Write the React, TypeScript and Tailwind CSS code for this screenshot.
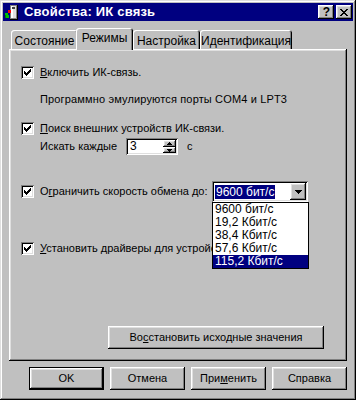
import React from "react";

/* ─── Win98 bevels ─── */
const RAISED =
    "shadow-[inset_-1px_-1px_0_#000,inset_1px_1px_0_#fff,inset_-2px_-2px_0_#808080,inset_2px_2px_0_#dfdfdf]";
const SUNKEN =
    "shadow-[inset_1px_1px_0_#808080,inset_-1px_-1px_0_#fff,inset_2px_2px_0_#000,inset_-2px_-2px_0_#dfdfdf]";

const SPEEDS = ["9600 бит/с", "19,2 Кбит/с", "38,4 Кбит/с", "57,6 Кбит/с", "115,2 Кбит/с"];

const TABS = [
    { label: "Состояние", w: "w-[67px]" },
    { label: "Режимы", w: "w-[57px]", active: true },
    { label: "Настройка", w: "w-[67px]" },
    { label: "Идентификация", w: "w-[92px]" },
];

function Check() {
    return (
        <span className={`w-[13px] h-[13px] bg-white shrink-0 ${SUNKEN}`}>
            <svg width="13" height="13" viewBox="0 0 13 13" shapeRendering="crispEdges">
                <path
                    fill="#000"
                    d="M3 5h1v3h-1z M4 6h1v3h-1z M5 7h1v3h-1z M6 6h1v3h-1z M7 5h1v3h-1z M8 4h1v3h-1z M9 3h1v3h-1z"
                />
            </svg>
        </span>
    );
}

function Arrow({ up = false, size = 7 }: { up?: boolean; size?: number }) {
    const h = Math.ceil(size / 2);
    return (
        <svg width={size} height={h} viewBox={`0 0 ${size} ${h}`} shapeRendering="crispEdges">
            <path fill="#000" d={up ? `M${size / 2} 0L${size} ${h}H0z` : `M0 0H${size}L${size / 2} ${h}z`} />
        </svg>
    );
}

function Btn({ children, def = false, w = "w-[75px]" }: { children: React.ReactNode; def?: boolean; w?: string }) {
    return (
        <div className={`${w} h-[23px] ${def ? "border border-black" : ""}`}>
            <div className={`w-full h-full flex items-center justify-center bg-[#c0c0c0] ${RAISED}`}>{children}</div>
        </div>
    );
}

export default function App() {
    return (
        <div
            className={`w-[356px] h-[400px] bg-[#c0c0c0] p-[3px] flex flex-col font-['Liberation_Sans',Arial,sans-serif] text-[11px] leading-[13px] text-black shadow-[inset_-1px_-1px_0_#000,inset_1px_1px_0_#dfdfdf,inset_-2px_-2px_0_#808080,inset_2px_2px_0_#fff]`}
        >
            {/* ── Title bar ── */}
            <div className="h-[18px] bg-[#000080] flex items-center pl-[1px] pr-[1px]">
                <svg width="16" height="16" viewBox="0 0 16 16" shapeRendering="crispEdges" className="shrink-0">
                    <path fill="#808080" d="M6 1h7v14h-7z" />
                    <path fill="#dfdfdf" d="M7 2h5v12h-5z" />
                    <path fill="#fff" d="M7 2h2v12h-2z" />
                    <path fill="#000" d="M13 1h1v15h-8v-1h7z" />
                    <path fill="#404040" d="M8 3h3v2h-3z" />
                    <path fill="#ff0000" d="M4 6h3v3h-3z" />
                    <path fill="#00c000" d="M1 9h3v2h-3z M2 11h3v3h-3z" />
                    <path fill="#008000" d="M1 11h1v3h-1z" />
                </svg>
                <span className="ml-[4px] text-white font-bold text-[13px] leading-[18px] tracking-[0.2px]">
                    Свойства: ИК связь
                </span>
                <div className="ml-auto flex gap-[2px]">
                    <div className={`w-[16px] h-[14px] bg-[#c0c0c0] flex items-center justify-center ${RAISED}`}>
                        <span className="font-bold text-[12px] leading-[12px] pl-[1px]">?</span>
                    </div>
                    <div className={`w-[16px] h-[14px] bg-[#c0c0c0] flex items-center justify-center ${RAISED}`}>
                        <svg width="8" height="7" viewBox="0 0 8 7" shapeRendering="crispEdges">
                            <path
                                fill="#000"
                                d="M0 0h2v1h-2z M6 0h2v1h-2z M1 1h2v1h-2z M5 1h2v1h-2z M2 2h4v1h-4z M3 3h2v1h-2z M2 4h4v1h-4z M1 5h2v1h-2z M5 5h2v1h-2z M0 6h2v1h-2z M6 6h2v1h-2z"
                            />
                        </svg>
                    </div>
                </div>
            </div>

            {/* ── Tabs + panel ── */}
            <div className="px-[6px] mt-[7px]">
                <div className="flex items-end h-[21px] pl-[2px] text-[12px]">
                    {TABS.map(({ label, w, active }) =>
                        active ? (
                            <div
                                key={label}
                                className={`${w} -ml-[2px] h-[22px] -mb-[1px] relative z-10 bg-[#c0c0c0] rounded-t-[3px] flex justify-center pt-[4px] shadow-[inset_1px_1px_0_#fff,inset_-1px_0_0_#000,inset_-2px_0_0_#808080]`}
                            >
                                {label}
                            </div>
                        ) : (
                            <div
                                key={label}
                                className={`${w} h-[19px] bg-[#c0c0c0] rounded-t-[3px] flex justify-center pt-[5px] shadow-[inset_1px_1px_0_#fff,inset_-1px_0_0_#000,inset_-2px_0_0_#808080]`}
                            >
                                {label}
                            </div>
                        )
                    )}
                </div>

                <div className={`h-[312px] relative flex flex-col pt-[17px] pl-[12px] ${RAISED}`}>
                    <div className="flex items-center h-[13px]">
                        <Check />
                        <span className="ml-[6px]">
                            <span className="underline">В</span>ключить ИК-связь.
                        </span>
                    </div>

                    <div className="h-[13px] mt-[14px] pl-[19px] tracking-[0.15px]">
                        Программно эмулируются порты COM4 и LPT3
                    </div>

                    <div className="flex items-center h-[13px] mt-[16px]">
                        <Check />
                        <span className="ml-[6px]">
                            <span className="underline">П</span>оиск внешних устройств ИК-связи.
                        </span>
                    </div>

                    <div className="flex items-center h-[17px] mt-[3px] pl-[19px]">
                        <span className="w-[86px]">Искать каждые</span>
                        <div className={`w-[52px] h-[17px] bg-white flex items-center pl-[4px] pr-[2px] ${SUNKEN}`}>
                            <span className="flex-1 text-[12px]">3</span>
                            <div className="flex flex-col w-[13px]">
                                <div className={`h-[7px] bg-[#c0c0c0] flex items-center justify-center ${RAISED}`}>
                                    <Arrow up size={5} />
                                </div>
                                <div className={`h-[6px] bg-[#c0c0c0] flex items-center justify-center ${RAISED}`}>
                                    <Arrow size={5} />
                                </div>
                            </div>
                        </div>
                        <span className="ml-[9px]">с</span>
                    </div>

                    <div className="flex items-center h-[21px] mt-[26px]">
                        <Check />
                        <span className="ml-[6px] w-[172px] whitespace-nowrap">
                            О<span className="underline">г</span>раничить скорость обмена до:
                        </span>
                        <div className={`relative w-[96px] h-[21px] bg-white flex items-center pl-[3px] pr-[2px] text-[12px] ${SUNKEN}`}>
                            <span className="bg-[#000080] text-white px-[1px] leading-[14px]">9600 бит/с</span>
                            <div className={`ml-auto w-[16px] h-[17px] bg-[#c0c0c0] flex items-center justify-center ${RAISED}`}>
                                <Arrow size={7} />
                            </div>
                            <div className="absolute top-[21px] left-0 w-[97px] border border-black bg-white z-20">
                                {SPEEDS.map((s, i) => (
                                    <div
                                        key={s}
                                        className={`h-[13px] px-[2px] ${i === SPEEDS.length - 1 ? "bg-[#000080] text-white" : ""}`}
                                    >
                                        {s}
                                    </div>
                                ))}
                            </div>
                        </div>
                    </div>

                    <div className="flex items-center h-[13px] mt-[40px]">
                        <Check />
                        {/* clipped where the open list covers it */}
                        <span className="ml-[6px] w-[172px] overflow-hidden whitespace-nowrap">
                            <span className="underline">У</span>становить драйверы для устройств ИК-связи
                        </span>
                    </div>

                    <div className="mt-auto mb-[12px] mr-[23px] self-end">
                        <Btn w="w-[216px]">
                            <span>
                                Во<span className="underline">с</span>становить исходные значения
                            </span>
                        </Btn>
                    </div>
                </div>
            </div>

            {/* ── Dialog buttons ── */}
            <div className="flex justify-end gap-[6px] mt-[6px] pr-[6px]">
                <Btn def>OK</Btn>
                <Btn>Отмена</Btn>
                <Btn>
                    <span>
                        При<span className="underline">м</span>енить
                    </span>
                </Btn>
                <Btn>Справка</Btn>
            </div>
        </div>
    );
}
